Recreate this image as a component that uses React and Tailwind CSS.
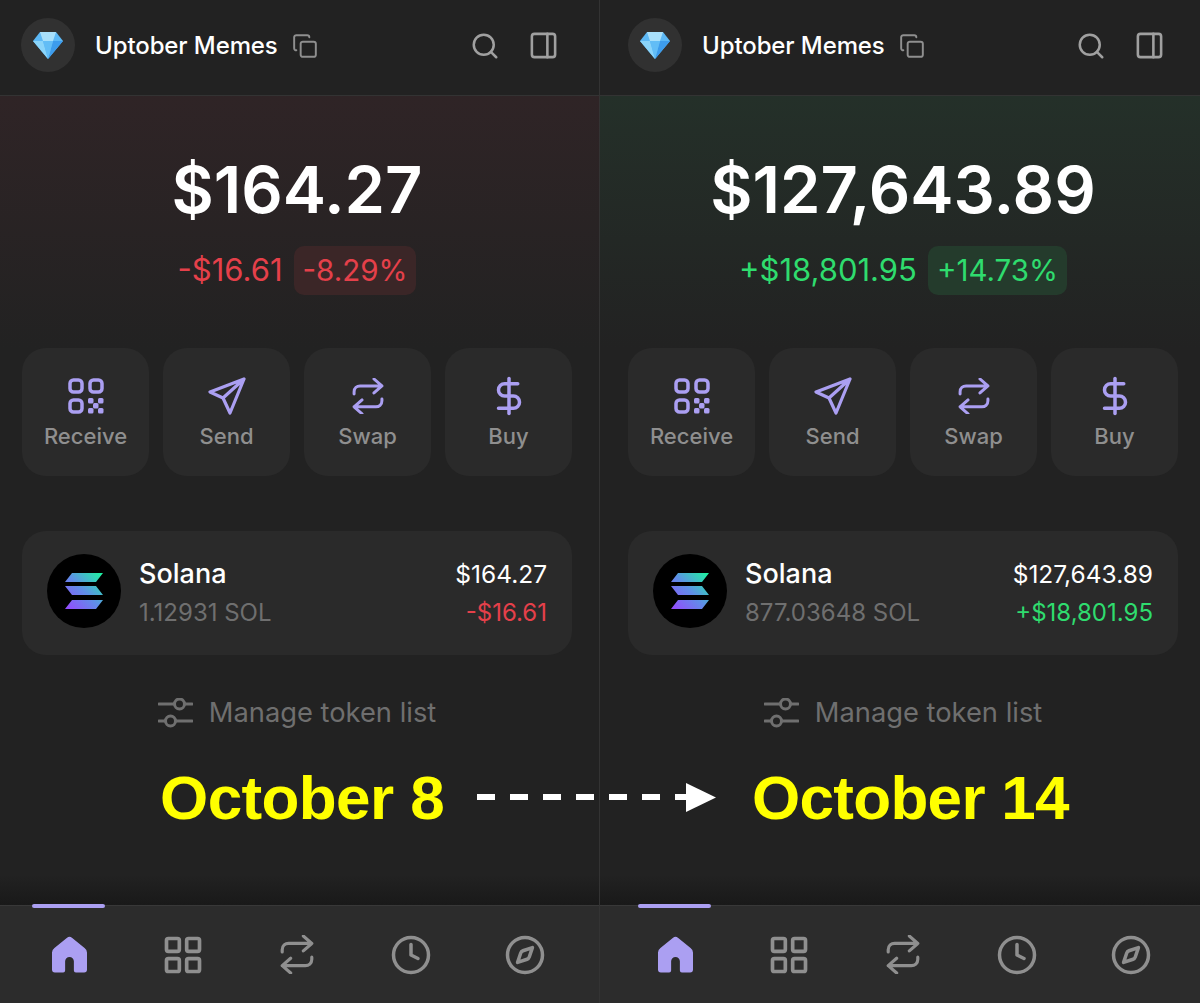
import { Search, PanelRight, Copy, DollarSign, LayoutGrid, Clock, Compass } from "lucide-react";

const Diamond = () => (
  <svg width="32" height="30" viewBox="0 0 32 30">
    <path d="M8 2h16l7 9-15 18L1 11z" fill="#5cb8f5" />
    <path d="M8 2h16l-3 9H11z" fill="#a8e0fb" />
    <path d="M1 11h10l5 18z" fill="#8ad4fa" />
    <path d="M31 11H21l-5 18z" fill="#3d9cec" />
    <path d="M11 11h10l-5 18z" fill="#62bdf6" />
  </svg>
);

const QrIcon = () => (
  <svg width="36" height="36" viewBox="0 0 36 36" fill="none" stroke="#ab9ff2" strokeWidth="3.5">
    <rect x="2" y="2" width="12" height="12" rx="3.5" />
    <rect x="22" y="2" width="12" height="12" rx="3.5" />
    <rect x="2" y="22" width="12" height="12" rx="3.5" />
    <g fill="#ab9ff2" stroke="none">
      <rect x="20" y="20" width="5.500" height="5.500" rx="1.500" />
      <rect x="30" y="20" width="5.500" height="5.500" rx="1.500" />
      <rect x="25" y="25" width="5.500" height="5.500" rx="1.500" />
      <rect x="20" y="30" width="5.500" height="5.500" rx="1.500" />
      <rect x="30" y="30" width="5.500" height="5.500" rx="1.500" />
    </g>
  </svg>
);

const SendIcon = () => (
  <svg width="38" height="38" viewBox="0 0 38 38" fill="none" stroke="#ab9ff2" strokeWidth="3.2" strokeLinejoin="round" strokeLinecap="round">
    <path d="M36 2 2 15l13 6 7 15zM36 2 15 21" />
  </svg>
);

const SwapIcon = ({ color = "#ab9ff2", size = 32 }) => (
  <svg width={size} height={size * 1.15} viewBox="0 0 32 37" fill="none" stroke={color} strokeWidth="3" strokeLinecap="round" strokeLinejoin="round">
    <path d="M2 16v-2c0-4 3-6 6-6h22M22 1l8 7-8 7" />
    <path d="M30 21v2c0 4-3 6-6 6H2M10 22l-8 7 8 7" />
  </svg>
);

const SlidersIcon = () => (
  <svg width="35" height="30" viewBox="0 0 35 30" fill="none" stroke="#6f6f6f" strokeWidth="3" strokeLinecap="round">
    <path d="M1 6h15M27 6h7M1 23h6M18 23h16" />
    <circle cx="21.500" cy="6" r="5" />
    <circle cx="12.500" cy="23" r="5" />
  </svg>
);

const HomeIcon = () => (
  <svg width="35" height="38" viewBox="0 0 36 38" fill="#ab9ff2">
    <path d="M15.500 1.200a4 4 0 0 1 5 0l13 10.600A6 6 0 0 1 36 16.500V34a3 3 0 0 1-3 3h-8.500a2 2 0 0 1-2-2V25.500a4.500 4.500 0 0 0-9 0V35a2 2 0 0 1-2 2H3a3 3 0 0 1-3-3V16.500a6 6 0 0 1 2.500-4.700z" />
  </svg>
);

const SolanaLogo = () => (
  <div className="mb-[4px] flex h-[74px] w-[74px] shrink-0 items-center justify-center rounded-full bg-black">
    <svg width="38" height="38" viewBox="0 0 38 38">
      <defs>
        <linearGradient id="sol" x1="0" y1="38" x2="38" y2="0" gradientUnits="userSpaceOnUse">
          <stop offset="0" stopColor="#9945ff" />
          <stop offset="0.5" stopColor="#5f8fe8" />
          <stop offset="1" stopColor="#19fb9b" />
        </linearGradient>
      </defs>
      <path d="M7 1h31l-7 9H0zM0 14h31l7 9H7zM7 28h31l-7 9H0z" fill="url(#sol)" />
    </svg>
  </div>
);

const ActionButton = ({ icon, label }) => (
  <div className="flex h-[128px] w-[127px] flex-col items-center rounded-[24px] bg-[#2a2a2a]">
    <div className="mt-[26px] flex h-[44px] items-center justify-center">{icon}</div>
    <span className="mt-[3px] text-[22px] leading-[30px] font-medium text-[#8f8f8f]">{label}</span>
  </div>
);

const NavBar = ({ pad, barLeft }) => (
  <nav className={`absolute right-0 bottom-0 left-0 flex h-[98px] items-center border-t border-[#383838] bg-[#2c2c2c] ${pad}`}>
    <span className={`absolute top-[-2px] h-[4px] w-[73px] rounded-[2px] bg-[#ab9ff2] ${barLeft}`} />
    {[
      <HomeIcon key="home" />,
      <LayoutGrid key="grid" size={44} color="#8f8f8f" strokeWidth={2} />,
      <SwapIcon key="swap" color="#8f8f8f" size={34} />,
      <Clock key="clock" size={42} color="#8f8f8f" strokeWidth={2} />,
      <Compass key="compass" size={42} color="#8f8f8f" strokeWidth={2} />,
    ].map((icon) => (
      <div key={icon.key} className="flex w-[114px] justify-center">{icon}</div>
    ))}
  </nav>
);

const Panel = ({ outer, pad, headerPad, navPad, barLeft, gradient, total, delta, pct, deltaColor, badgeBg, balance, value }) => (
  <div className={`relative flex h-[1003px] w-[600px] flex-col ${outer}`}>
    <header className={`flex h-[96px] items-center border-b border-[#333333] bg-[#222222] pb-[4px] ${headerPad}`}>
      <div className="-mt-[2px] flex h-[54px] w-[54px] items-center justify-center rounded-full bg-[#313131]">
        <Diamond />
      </div>
      <span className="ml-[20px] text-[24px] font-medium tracking-[-0.1px] text-white">Uptober Memes</span>
      <Copy className="ml-[14px]" size={26} color="#8f8f8f" strokeWidth={1.8} />
      <Search className="ml-auto" size={30} color="#a0a0a0" strokeWidth={2} />
      <PanelRight className="mr-[13px] ml-[28px]" size={31} color="#a0a0a0" strokeWidth={2} />
    </header>

    <section className={`flex h-[252px] flex-col items-center bg-gradient-to-b ${gradient} ${pad}`}>
      <div className="mt-[56px] text-[65px] leading-[76px] font-semibold text-white">{total}</div>
      <div className="mt-[18px] flex items-center gap-[11px]">
        <span className={`text-[31px] ${deltaColor}`}>{delta}</span>
        <span className={`flex h-[49px] items-center rounded-[10px] px-[9px] text-[29.500px] ${deltaColor} ${badgeBg}`}>{pct}</span>
      </div>
    </section>

    <div className={`flex gap-[14px] ${pad}`}>
      <ActionButton icon={<QrIcon />} label="Receive" />
      <ActionButton icon={<SendIcon />} label="Send" />
      <ActionButton icon={<SwapIcon />} label="Swap" />
      <ActionButton icon={<DollarSign size={42} color="#ab9ff2" strokeWidth={2} />} label="Buy" />
    </div>

    <div className={pad}>
      <div className="mt-[55px] flex h-[124px] items-center rounded-[24px] bg-[#2a2a2a] px-[25px]">
        <SolanaLogo />
        <div className="ml-[18px] flex flex-col gap-[9px]">
          <span className="text-[27px] leading-[30px] font-medium text-white">Solana</span>
          <span className="text-[24px] leading-[30px] text-[#6f6f6f]">{balance}</span>
        </div>
        <div className="ml-auto flex flex-col items-end gap-[9px]">
          <span className="text-[24.500px] leading-[30px] text-white">{value}</span>
          <span className={`text-[24px] leading-[30px] ${deltaColor}`}>{delta}</span>
        </div>
      </div>
    </div>

    <div className={`mt-[42px] flex items-center justify-center gap-[16px] ${pad}`}>
      <SlidersIcon />
      <span className="text-[27.300px] leading-[32px] text-[#6f6f6f]">Manage token list</span>
    </div>

    <div className="absolute right-0 bottom-[98px] left-0 h-[30px] bg-gradient-to-b from-[#222222] to-[#191919]" />
    <NavBar pad={navPad} barLeft={barLeft} />
  </div>
);

export default function App() {
  return (
    <div className="relative h-[1003px] w-[1200px] overflow-hidden bg-[#222222] font-['Inter',sans-serif]">
      <div className="flex">
        <Panel
          outer="border-r border-[#333333]"
          pad="pr-[27px] pl-[22px]"
          headerPad="pr-[27px] pl-[21px]"
          navPad="pl-[12px]"
          barLeft="left-[32px]"
          gradient="from-[#2f2426] to-[#222222]"
          total="$164.27"
          delta="-$16.61"
          pct="-8.29%"
          deltaColor="text-[#e5404a]"
          badgeBg="bg-[#3b2627]"
          balance="1.12931 SOL"
          value="$164.27"
        />
        <Panel
          pad="pr-[22px] pl-[28px]"
          headerPad="pr-[22px] pl-[28px]"
          navPad="pl-[18px]"
          barLeft="left-[38px]"
          gradient="from-[#243029] to-[#222222]"
          total="$127,643.89"
          delta="+$18,801.95"
          pct="+14.73%"
          deltaColor="text-[#2fdc6e]"
          badgeBg="bg-[#243b2c]"
          balance="877.03648 SOL"
          value="$127,643.89"
        />
      </div>

      <span className="absolute top-[762px] left-[160px] font-['Liberation_Sans',sans-serif] text-[62px] leading-[72px] font-bold tracking-[-0.6px] text-[#ffff00]">October 8</span>
      <span className="absolute top-[762px] left-[752px] font-['Liberation_Sans',sans-serif] text-[62px] leading-[72px] font-bold tracking-[-0.7px] text-[#ffff00]">October 14</span>
      <svg className="absolute top-[780px] left-[475px]" width="245" height="36" viewBox="0 0 245 36">
        <path d="M2 17h18M35 17h18M68 17h18M101 17h18M134 17h18M167 17h18M200 17h14" stroke="#ffffff" strokeWidth="6" />
        <path d="M211 3l30 14.500L211 32z" fill="#ffffff" />
      </svg>
    </div>
  );
}
